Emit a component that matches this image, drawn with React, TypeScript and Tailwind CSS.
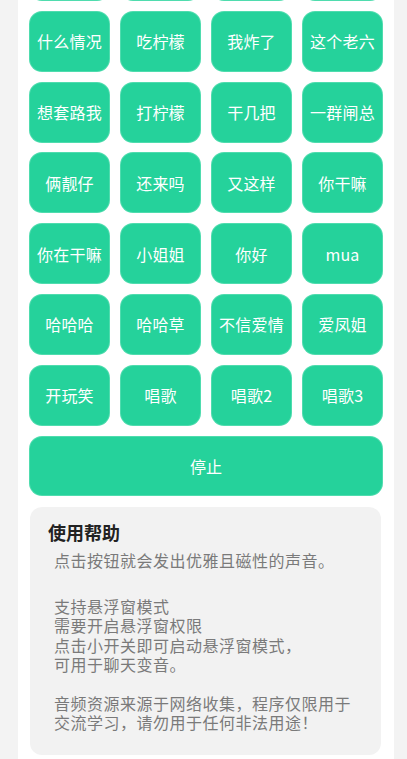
const sounds = [
  "哈哈", "嘿嘿", "哦豁", "好家伙",
  "什么情况", "吃柠檬", "我炸了", "这个老六",
  "想套路我", "打柠檬", "干几把", "一群闸总",
  "俩靓仔", "还来吗", "又这样", "你干嘛",
  "你在干嘛", "小姐姐", "你好", "mua",
  "哈哈哈", "哈哈草", "不信爱情", "爱凤姐",
  "开玩笑", "唱歌", "唱歌2", "唱歌3",
];

export default function App() {
  return (
    <div
      className="h-[759px] overflow-hidden bg-[#f3f3f3]"
      style={{ fontFamily: '"Noto Sans CJK SC", "Noto Sans", sans-serif' }}
    >
      <div className="ml-[18px] w-[376px] h-[820px] bg-white px-[12px] flex flex-col -mt-[59px]">
        <div className="grid grid-cols-4 gap-x-[12px] gap-y-[11.8px]">
          {sounds.map((s, i) => (
            <button
              key={i}
              className="h-[59px] rounded-[12px] bg-[#25d29b] text-white text-[16px] tracking-[0.2px] leading-none flex items-center justify-center shadow-[0_0_0_1px_#4fdcae]"
            >
              {i < 4 ? "" : s}
            </button>
          ))}
        </div>

        {/* stop */}
        <button className="mt-[11.8px] w-full h-[58px] shrink-0 rounded-[12px] bg-[#25d29b] text-white text-[16px] flex items-center justify-center shadow-[0_0_0_1px_#4fdcae]">
          停止
        </button>

        {/* help */}
        <div className="mt-[12px] w-[351px] h-[248px] shrink-0 rounded-[12px] bg-[#f2f2f2] pt-[12px] pl-[18px]">
          <h2 className="text-[18px] leading-[26px] font-bold text-[#222]">使用帮助</h2>
          <div className="mt-[5px] pl-[6px] text-[16px] tracking-[0.5px] leading-[20px] text-[#7a7a7a]">
            <p>点击按钮就会发出优雅且磁性的声音。</p>
            <div className="mt-[27px] leading-[19.5px]">
              <p>支持悬浮窗模式</p>
              <p>需要开启悬浮窗权限</p>
              <p>点击小开关即可启动悬浮窗模式，</p>
              <p>可用于聊天变音。</p>
            </div>
            <div className="mt-[19px] leading-[19.5px]">
              <p>音频资源来源于网络收集，程序仅限用于</p>
              <p>交流学习，请勿用于任何非法用途！</p>
            </div>
          </div>
        </div>
      </div>
    </div>
  );
}
